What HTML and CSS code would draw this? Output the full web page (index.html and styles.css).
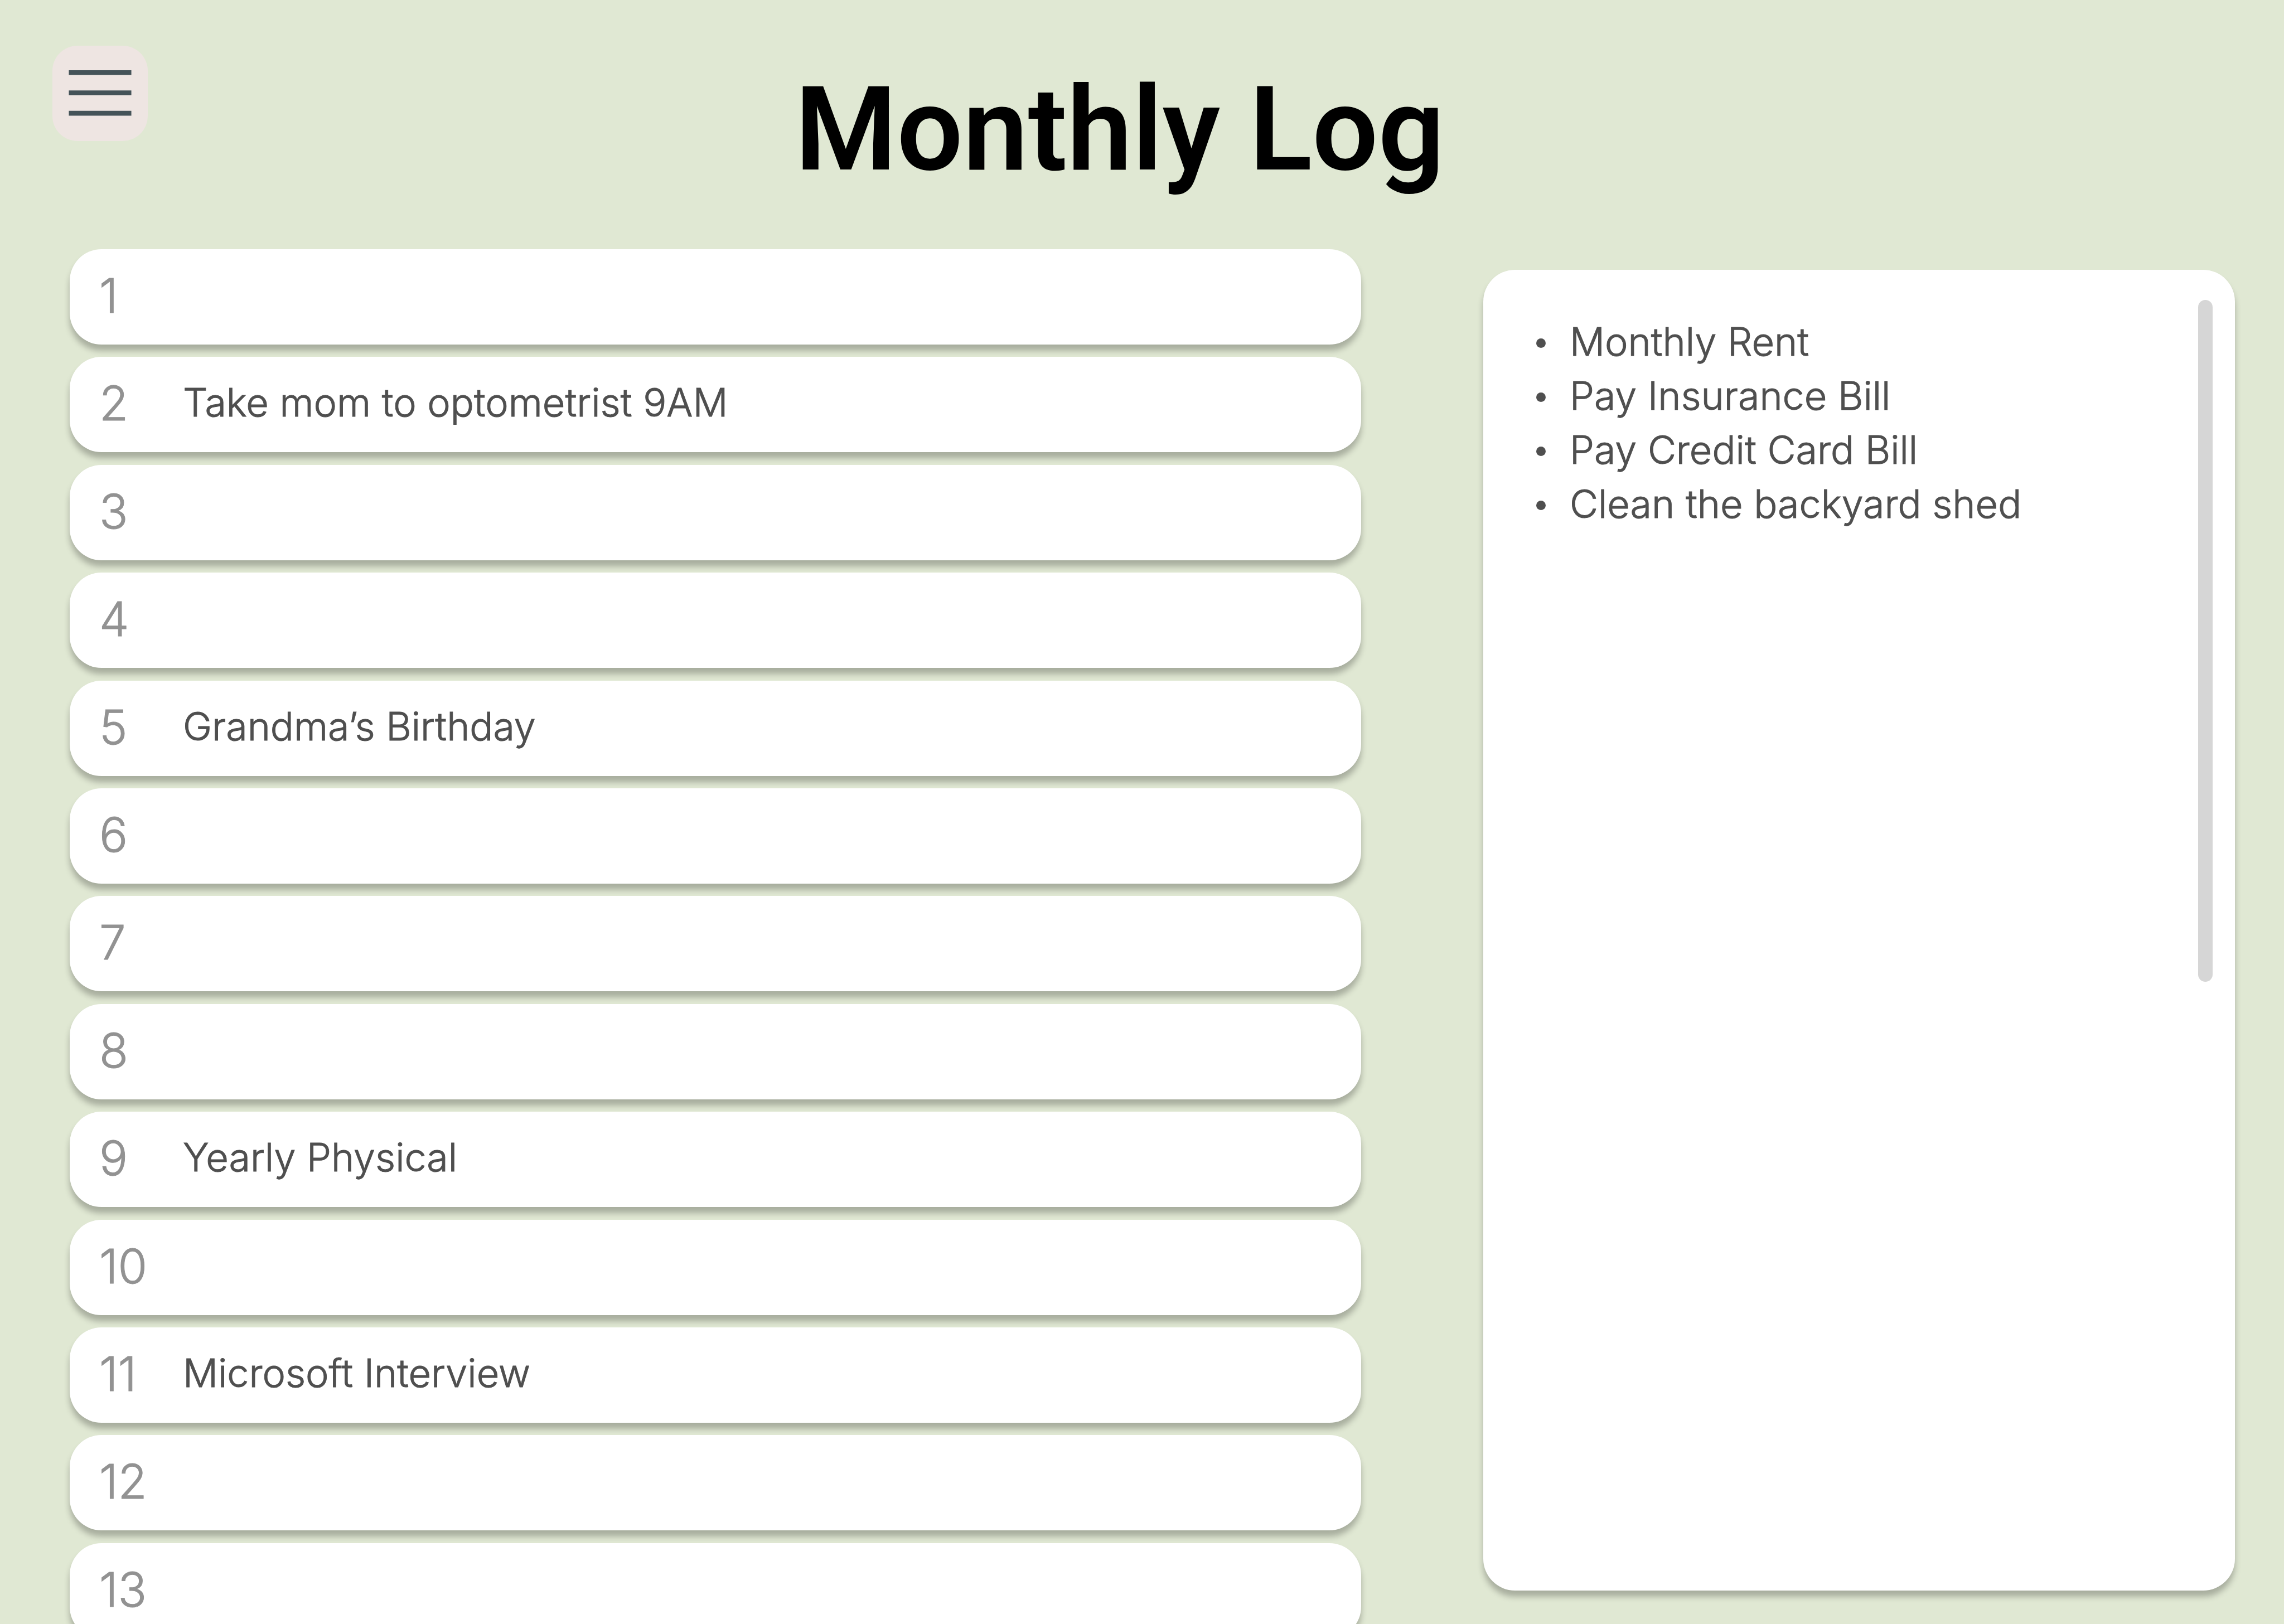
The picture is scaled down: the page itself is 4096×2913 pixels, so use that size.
FILE: index.html
```html
<!DOCTYPE html>
<html lang="en">
<head>
  <meta charset="utf-8">
  <meta name="viewport" content="width=device-width, initial-scale=1">
  <title>Monthly Log</title>
  <link rel="stylesheet" href="styles.css">
</head>
<body>
  <header class="header">
    <button class="menu-button" type="button" aria-label="Open menu">
      <svg class="menu-icon" viewBox="0 0 180 180" aria-hidden="true">
        <path d="M31 50.8h118M31 89h118M31 127.5h118" fill="none" stroke="#445358" stroke-width="9"/>
      </svg>
    </button>
    <h1 class="title">Monthly Log</h1>
  </header>

  <main class="content">
    <ol class="days">
      <li class="day"><span class="day-number">1</span></li>
      <li class="day"><span class="day-number">2</span><span class="day-event">Take mom to optometrist 9AM</span></li>
      <li class="day"><span class="day-number">3</span></li>
      <li class="day"><span class="day-number">4</span></li>
      <li class="day"><span class="day-number">5</span><span class="day-event">Grandma’s Birthday</span></li>
      <li class="day"><span class="day-number">6</span></li>
      <li class="day"><span class="day-number">7</span></li>
      <li class="day"><span class="day-number">8</span></li>
      <li class="day"><span class="day-number">9</span><span class="day-event">Yearly Physical</span></li>
      <li class="day"><span class="day-number">10</span></li>
      <li class="day"><span class="day-number">11</span><span class="day-event">Microsoft Interview</span></li>
      <li class="day"><span class="day-number">12</span></li>
      <li class="day"><span class="day-number">13</span></li>
    </ol>

    <section class="tasks" aria-label="Monthly tasks">
      <ul class="task-list">
        <li class="task">Monthly Rent</li>
        <li class="task">Pay Insurance Bill</li>
        <li class="task">Pay Credit Card Bill</li>
        <li class="task">Clean the backyard shed</li>
      </ul>
      <div class="scroll-thumb"></div>
    </section>
  </main>
</body>
</html>
```
FILE: styles.css
```css
* {
  box-sizing: border-box;
}

body {
  height: 100vh;
  margin: 0;
  overflow: hidden;
  background: #e0e8d3;
  color: #4f4f4f;
  font-family: Inter, "Liberation Sans", sans-serif;
  font-size: 70px;
  font-weight: 300;
}

ol,
ul {
  margin: 0;
  padding: 0;
  list-style: none;
}

/* Header */

.header {
  display: grid;
  grid-template-columns: 1fr auto 1fr;
  align-items: start;
  padding: 82px 174px 94px 94px;
}

.menu-button {
  width: 171px;
  height: 171px;
  padding: 0;
  border: 0;
  border-radius: 45px;
  background: #eee5e2;
  cursor: pointer;
}

.menu-icon {
  display: block;
  width: 100%;
  height: 100%;
}

.title {
  margin: 31px 0 0;
  color: #000;
  font-family: Roboto, "Liberation Sans", sans-serif;
  font-size: 209px;
  font-weight: 600;
  line-height: 240px;
}

/* Two columns: the days and the task panel */

.content {
  display: grid;
  grid-template-columns: 2316fr 1348fr;
  align-items: start;
  gap: 219px;
  padding: 0 88px 0 125px;
  -webkit-text-stroke: 1px currentColor;
}

.days {
  display: flex;
  flex-direction: column;
  justify-content: space-between;
  min-height: 2492px;
}

.day,
.tasks {
  border-radius: 57px;
  background: #fff;
  box-shadow: 0 11px 11px rgba(0, 0, 0, 0.25);
}

.day {
  display: flex;
  align-items: center;
  height: 171px;
  padding: 0 53px 4px;
}

.day-number {
  width: 150px;
  color: #929292;
  font-size: 85px;
}

.day-event {
  padding-bottom: 4px;
}

.tasks {
  display: flex;
  justify-content: space-between;
  min-height: 2369px;
  margin-top: 37px;
  padding: 54px 40px 54px 95px;
}

.task-list {
  padding-top: 26px;
}

.task {
  display: flex;
  align-items: center;
  gap: 43px;
  line-height: 97px;
}

.task::before {
  width: 17px;
  height: 17px;
  margin-top: 6px;
  border-radius: 50%;
  background: #4f4f4f;
  content: "";
}

.scroll-thumb {
  width: 26px;
  height: 1223px;
  border-radius: 13px;
  background: #d6d6d6;
}
```
